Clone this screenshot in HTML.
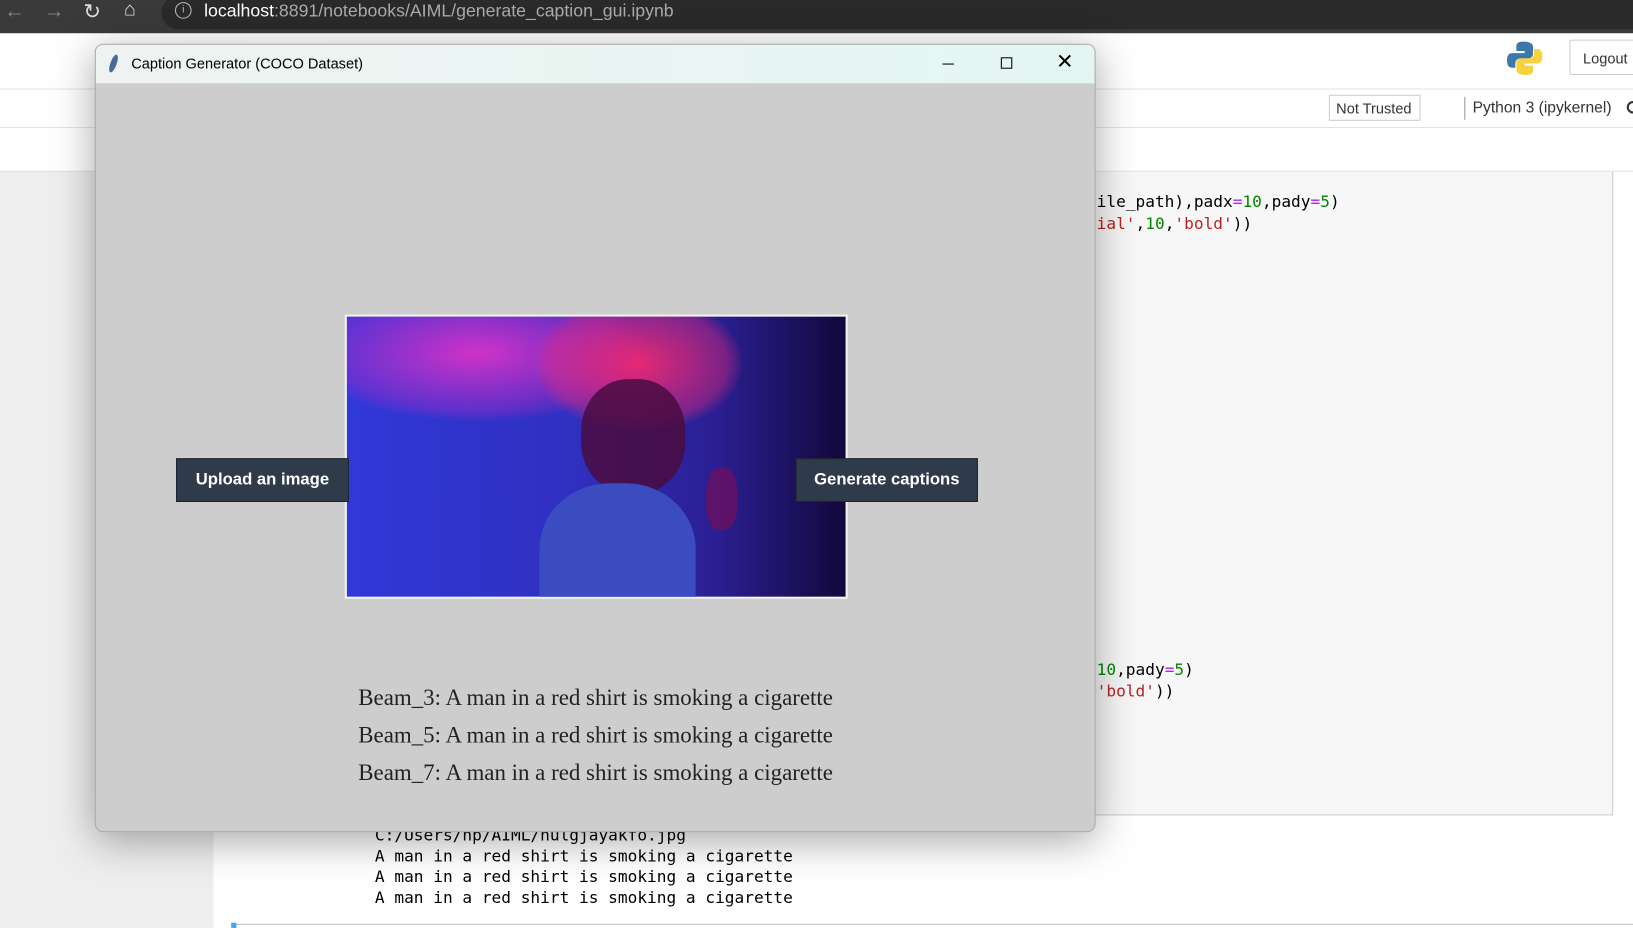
<!DOCTYPE html>
<html><head><meta charset="utf-8"><style>
*{margin:0;padding:0;box-sizing:border-box}
html,body{width:1633px;height:928px;overflow:hidden;background:#eee}
#s{position:absolute;left:0;top:0;width:1568px;height:891px;transform:scale(1.04145);transform-origin:0 0;font-family:"Liberation Sans",sans-serif}
.a{position:absolute}
.mono{font-family:"DejaVu Sans Mono","Liberation Mono",monospace}
</style></head><body><div id="s">
<div class="a" style="left:0;top:0;width:1568px;height:32px;background:#3a3a3a"></div>
<div class="a" style="left:155px;top:-4px;width:1430px;height:32px;background:#2a2a2a;border-radius:16px"></div>
<div class="a" style="left:4px;top:0;color:#888;font-size:20px">←</div>
<div class="a" style="left:42px;top:0;color:#888;font-size:20px">→</div>
<div class="a" style="left:80px;top:-1px;color:#ddd;font-size:20px">↻</div>
<div class="a" style="left:119px;top:-1px;color:#ddd;font-size:19px">⌂</div>
<div class="a" style="left:168px;top:2px;width:16px;height:16px;border:1.5px solid #bbb;border-radius:50%;color:#bbb;font-size:10px;text-align:center;line-height:13px">i</div>
<div class="a" style="left:196px;top:1px;font-size:17px;color:#fff">localhost<span style="color:#aaa">:8891/notebooks/AIML/generate_caption_gui.ipynb</span></div>
<div class="a" style="left:0;top:32px;width:1568px;height:133px;background:#fff;border-bottom:1px solid #ddd"></div>
<div class="a" style="left:0;top:85px;width:1568px;height:1px;background:#e3e3e3"></div>
<div class="a" style="left:0;top:122px;width:1568px;height:1px;background:#e3e3e3"></div>
<svg class="a" style="left:1446px;top:38px" width="36" height="36" viewBox="0 0 36 36"><path d="M17 2c-7 0-7 3-7 5v4h8v2H6c-3 0-5 2-5 7s2 7 5 7h3v-4c0-3 2-5 5-5h8c2 0 4-2 4-4V7c0-3-3-5-9-5z" fill="#3d78ab"/><path d="M19 34c7 0 7-3 7-5v-4h-8v-2h12c3 0 5-2 5-7s-2-7-5-7h-3v4c0 3-2 5-5 5h-8c-2 0-4 2-4 4v7c0 3 3 5 9 5z" fill="#f7d13e"/></svg>
<div class="a" style="left:1507px;top:38px;width:70px;height:34px;border:1px solid #ccc;border-radius:2px;font-size:14px;padding:9px 12px;color:#333">Logout</div>
<div class="a" style="left:1276px;top:91px;width:88px;height:25px;border:1px solid #ccc;font-size:14px;padding:4px 6px;color:#333">Not Trusted</div>
<div class="a" style="left:1406px;top:93px;width:1px;height:22px;background:#999"></div>
<div class="a" style="left:1414px;top:95px;font-size:15px;color:#333">Python 3 (ipykernel)</div>
<div class="a" style="left:1562px;top:97px;width:12px;height:12px;border-radius:50%;border:2px solid #333"></div>
<div class="a" style="left:205px;top:165px;width:1363px;height:726px;background:#fff"></div>
<div class="a" style="left:1040px;top:165px;width:509px;height:618px;background:#f7f7f7;border:1px solid #ccc;border-top:none"></div>
<div class="a mono" style="left:1053px;top:184px;font-size:15.5px;line-height:20.5px;color:#000;white-space:pre">ile_path),padx<span style="color:#a2f">=</span><span style="color:#080">10</span>,pady<span style="color:#a2f">=</span><span style="color:#080">5</span>)
<span style="color:#b22">ial'</span>,<span style="color:#080">10</span>,<span style="color:#b22">'bold'</span>))</div>
<div class="a mono" style="left:1053px;top:633px;font-size:15.5px;line-height:20.5px;color:#000;white-space:pre"><span style="color:#080">10</span>,pady<span style="color:#a2f">=</span><span style="color:#080">5</span>)
<span style="color:#b22">'bold'</span>))</div>
<div class="a mono" style="left:360px;top:792px;font-size:15.5px;line-height:20px;color:#000;white-space:pre">C:/Users/hp/AIML/hulgjayakfo.jpg
A man in a red shirt is smoking a cigarette
A man in a red shirt is smoking a cigarette
A man in a red shirt is smoking a cigarette</div>
<div class="a" style="left:222px;top:887px;width:1346px;height:1px;background:#bbb"></div>
<div class="a" style="left:222px;top:886px;width:5px;height:5px;background:#42a5f5"></div>
<div class="a" style="left:91px;top:42px;width:961px;height:757px;background:#cdcdcd;border:1px solid #aaa;border-radius:8px;box-shadow:0 8px 40px rgba(0,0,0,.35);overflow:hidden">
 <div style="height:37px;background:linear-gradient(90deg,#eef3f1,#e4f6f2);position:relative">
  <div class="a" style="left:14px;top:9px;width:6px;height:18px;background:#4a6a9a;border-radius:50%;transform:rotate(20deg)"></div>
  <div class="a" style="left:34px;top:10px;font-size:14px;color:#000">Caption Generator (COCO Dataset)</div>
  <div class="a" style="left:813px;top:18px;width:11px;height:1px;background:#000"></div>
  <div class="a" style="left:869px;top:12px;width:11px;height:11px;border:1px solid #000"></div>
  <div class="a" style="left:922px;top:4px;font-size:20px;color:#000">✕</div>
 </div>
 <div class="a" style="left:239px;top:259px;width:483px;height:273px;border:2px solid #f0f0f0;background:linear-gradient(90deg,#3138d8 0%,#3030c0 45%,#2a1e90 75%,#12083a 100%);overflow:hidden">
  <div class="a" style="left:-40px;top:-30px;width:330px;height:130px;border-radius:50%;background:radial-gradient(ellipse,rgba(235,50,200,.85),rgba(200,40,200,.3) 60%,transparent 72%)"></div>
  <div class="a" style="left:180px;top:-20px;width:200px;height:130px;border-radius:50%;background:radial-gradient(ellipse,rgba(250,40,110,.9),rgba(240,40,120,.4) 60%,transparent 72%)"></div>
  <div class="a" style="left:225px;top:60px;width:100px;height:110px;border-radius:45%;background:#4a0c40;opacity:.85"></div>
  <div class="a" style="left:185px;top:160px;width:150px;height:140px;border-radius:45% 45% 0 0;background:#3a4cc0"></div>
  <div class="a" style="left:345px;top:145px;width:30px;height:60px;border-radius:40%;background:#6a1060;opacity:.8"></div>
 </div>
 <div class="a" style="left:77px;top:397px;width:166px;height:42px;background:#2f3a4b;border:1px solid #1e2530;color:#fff;font-weight:bold;font-size:16px;text-align:center;line-height:40px">Upload an image</div>
 <div class="a" style="left:672px;top:397px;width:175px;height:42px;background:#2f3a4b;border:1px solid #1e2530;color:#fff;font-weight:bold;font-size:16px;text-align:center;line-height:40px">Generate captions</div>
 <div class="a" style="left:252px;top:609px;font-family:'Liberation Serif',serif;font-size:22px;line-height:36px;color:#222;white-space:pre">Beam_3: A man in a red shirt is smoking a cigarette
Beam_5: A man in a red shirt is smoking a cigarette
Beam_7: A man in a red shirt is smoking a cigarette</div>
</div>
</div></body></html>
